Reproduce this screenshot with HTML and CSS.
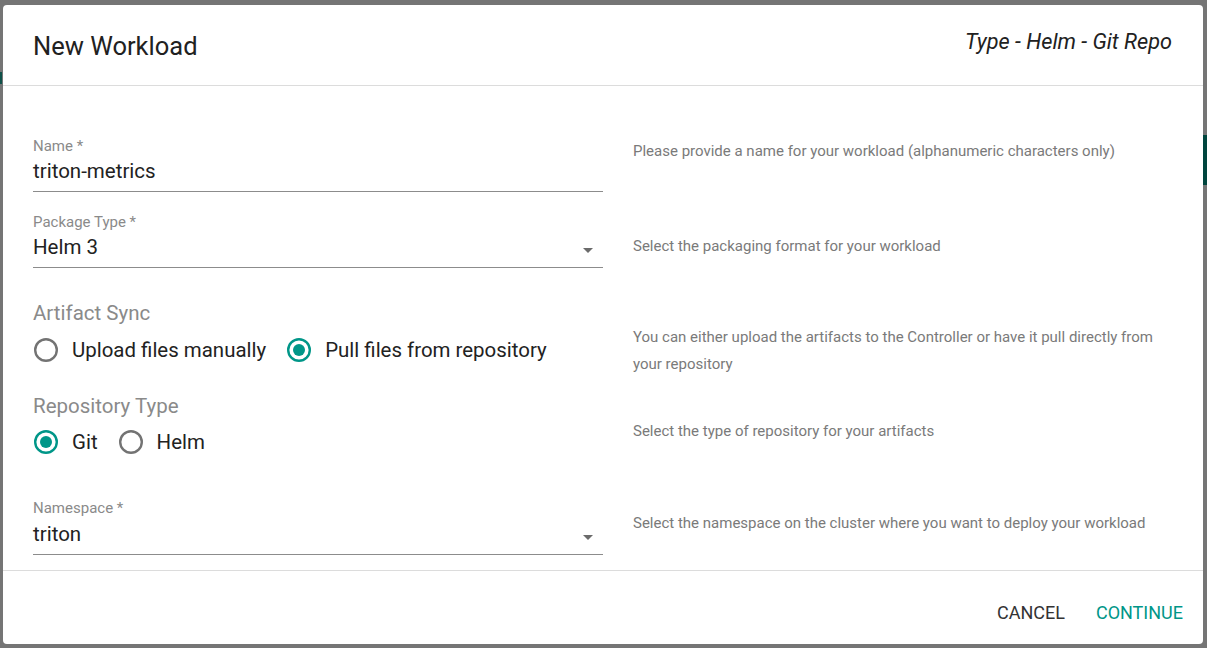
FILE: index.html
```html
<!DOCTYPE html>
<html lang="en">
<head>
<meta charset="utf-8">
<title>New Workload</title>
<link rel="stylesheet" href="styles.css">
</head>
<body>
<div class="backdrop">
  <div class="under under-left"></div>
  <div class="under under-right"></div>
  <div class="dialog">
    <div class="dialog-header">
      <h2 class="dialog-title">New Workload</h2>
      <div class="dialog-subtitle">Type - Helm - Git Repo</div>
    </div>
    <div class="dialog-body">
      <div class="row row-name">
        <div class="field">
          <label class="field-label">Name *</label>
          <div class="field-input">triton-metrics</div>
        </div>
        <p class="desc desc-name">Please provide a name for your workload (alphanumeric characters only)</p>
      </div>
      <div class="row row-package">
        <div class="field">
          <label class="field-label">Package Type *</label>
          <div class="field-input select">
            <span>Helm 3</span>
            <svg class="arrow" width="10" height="5" viewBox="0 0 10 5"><path d="M0 0l5 5 5-5z" fill="#6b6b6b"/></svg>
          </div>
        </div>
        <p class="desc desc-package">Select the packaging format for your workload</p>
      </div>
      <div class="row row-sync">
        <div class="group">
          <div class="legend">Artifact Sync</div>
          <div class="radios">
            <div class="radio">
              <svg class="radio-icon" width="24" height="24" viewBox="2 2 20 20"><circle cx="12" cy="12" r="9" fill="none" stroke="#737373" stroke-width="2"/></svg>
              <span class="radio-label">Upload files manually</span>
            </div>
            <div class="radio">
              <svg class="radio-icon" width="24" height="24" viewBox="2 2 20 20"><circle cx="12" cy="12" r="9" fill="none" stroke="#009688" stroke-width="2"/><circle cx="12" cy="12" r="5" fill="#009688"/></svg>
              <span class="radio-label">Pull files from repository</span>
            </div>
          </div>
        </div>
        <p class="desc desc-sync">You can either upload the artifacts to the Controller or have it pull directly from your repository</p>
      </div>
      <div class="row row-repo">
        <div class="group">
          <div class="legend">Repository Type</div>
          <div class="radios">
            <div class="radio">
              <svg class="radio-icon" width="24" height="24" viewBox="2 2 20 20"><circle cx="12" cy="12" r="9" fill="none" stroke="#009688" stroke-width="2"/><circle cx="12" cy="12" r="5" fill="#009688"/></svg>
              <span class="radio-label">Git</span>
            </div>
            <div class="radio">
              <svg class="radio-icon" width="24" height="24" viewBox="2 2 20 20"><circle cx="12" cy="12" r="9" fill="none" stroke="#737373" stroke-width="2"/></svg>
              <span class="radio-label">Helm</span>
            </div>
          </div>
        </div>
        <p class="desc desc-repo">Select the type of repository for your artifacts</p>
      </div>
      <div class="row row-namespace">
        <div class="field">
          <label class="field-label">Namespace *</label>
          <div class="field-input select">
            <span>triton</span>
            <svg class="arrow" width="10" height="5" viewBox="0 0 10 5"><path d="M0 0l5 5 5-5z" fill="#6b6b6b"/></svg>
          </div>
        </div>
        <p class="desc desc-namespace">Select the namespace on the cluster where you want to deploy your workload</p>
      </div>
    </div>
    <div class="dialog-footer">
      <button class="btn btn-cancel">CANCEL</button>
      <button class="btn btn-continue">CONTINUE</button>
    </div>
  </div>
</div>
</body>
</html>
```
FILE: styles.css
```css
* { box-sizing: border-box; }
html, body { margin: 0; padding: 0; }
body {
  font-family: Roboto, "Noto Sans", "Liberation Sans", sans-serif;
  background: #757575;
  width: 1207px;
  height: 648px;
  overflow: hidden;
}
.backdrop {
  position: relative;
  width: 1207px;
  height: 648px;
  padding: 5px 4px 4px 3px;
  background: #757575;
}
.under { position: absolute; }
.under-left {
  left: 0; top: 72px; width: 2px; height: 12px;
  background: #0f5149;
}
.under-right {
  right: 0; top: 135px; width: 4px; height: 50px;
  background: #00453e;
}
.dialog {
  position: relative;
  width: 1200px;
  height: 639px;
  background: #fff;
  border-radius: 4px;
  display: flex;
  flex-direction: column;
  overflow: hidden;
}
.dialog-header {
  display: flex;
  justify-content: space-between;
  align-items: flex-start;
  height: 81px;
  padding: 25px 31px 0 30px;
  border-bottom: 1px solid #dcdcdc;
}
.dialog-title {
  margin: 1px 0 0;
  font-size: 25.5px;
  line-height: 30px;
  font-weight: 400;
  color: #212121;
}
.dialog-subtitle {
  margin-top: -1px;
  font-size: 21.7px;
  line-height: 26px;
  font-style: italic;
  color: #212121;
}
.dialog-body {
  flex: 1;
  padding: 52px 30px 0 30px;
  border-bottom: 1px solid #dcdcdc;
}
.row {
  display: grid;
  grid-template-columns: 570px 540px;
  column-gap: 30px;
  align-items: start;
}
.row-name { height: 76px; }
.row-package { height: 87px; }
.row-sync { height: 93px; }
.row-repo { height: 106px; }
.row-namespace { height: 70px; }

.field-label {
  display: block;
  font-size: 15px;
  line-height: 16px;
  color: #8a8a8a;
}
.field-input {
  margin-top: 5px;
  font-size: 20.5px;
  line-height: 24px;
  padding-bottom: 8px;
  color: #222;
  border-bottom: 1px solid #8c8c8c;
}
.row-namespace .field-input { margin-top: 6px; }
.select {
  display: flex;
  justify-content: space-between;
  align-items: center;
}
.arrow { margin-right: 10px; margin-top: 7px; }

.legend {
  font-size: 20.5px;
  line-height: 24px;
  color: #8a8a8a;
}
.radios {
  display: flex;
  gap: 20px;
  margin-top: 13px;
}
.row-repo .radios { margin-top: 12px; }
.radio {
  display: flex;
  align-items: center;
  height: 24px;
}
.radio-icon { margin-left: 1px; flex: none; }
.radio-label {
  margin-left: 14px;
  font-size: 20.45px;
  line-height: 24px;
  color: #222;
}

.desc {
  margin: 0;
  font-size: 15px;
  line-height: 27px;
  color: #7a7a7a;
}
.desc-name { margin-top: 0; }
.desc-package { margin-top: 19px; }
.desc-sync { margin-top: 23px; }
.desc-repo { margin-top: 24px; }
.desc-namespace { margin-top: 10px; }

.dialog-footer {
  height: 73px;
  display: flex;
  justify-content: flex-end;
  align-items: flex-start;
  gap: 15px;
  padding: 24px 12px 0 0;
}
.btn {
  font-family: Roboto, "Noto Sans", "Liberation Sans", sans-serif;
  font-size: 18px;
  line-height: 36px;
  height: 36px;
  padding: 0 8px;
  border: none;
  background: transparent;
  cursor: pointer;
}
.btn-cancel { color: #333; }
.btn-continue { color: #009688; }
```
